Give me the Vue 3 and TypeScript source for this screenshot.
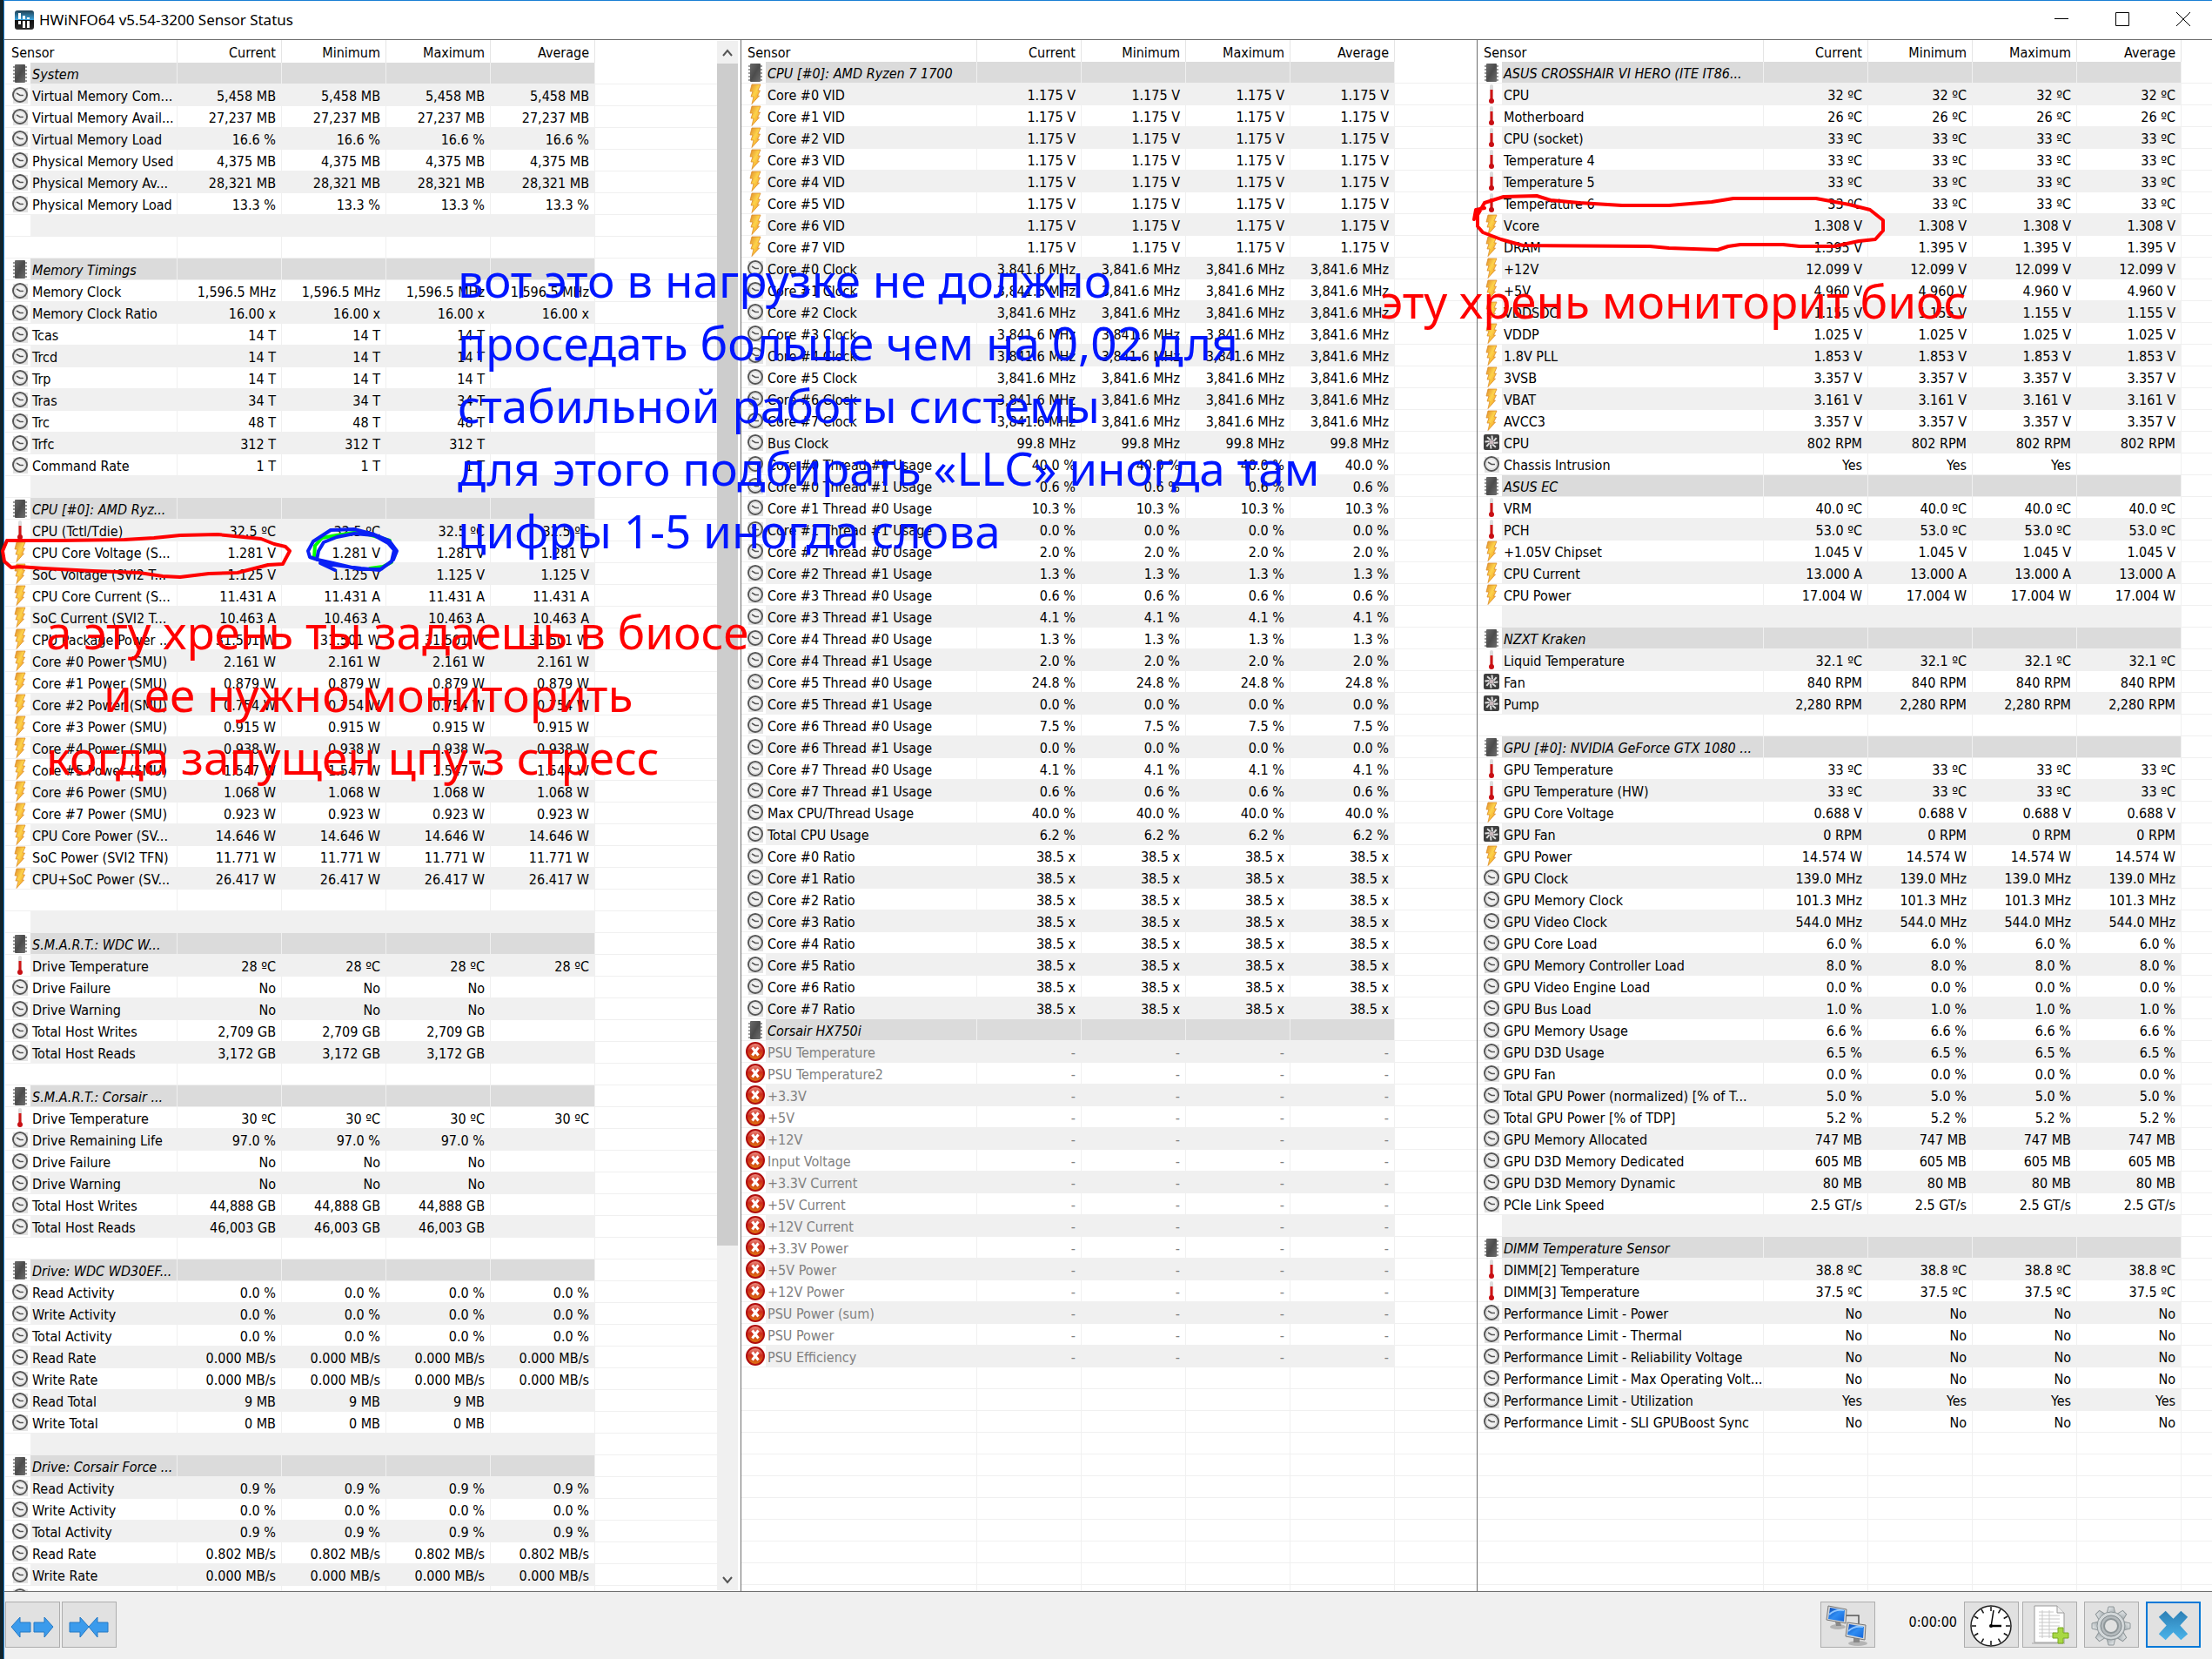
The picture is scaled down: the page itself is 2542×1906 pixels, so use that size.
<script setup lang="ts">
type Kind = 'chip' | 'clock' | 'temp' | 'bolt' | 'fan' | 'off' | 'none'

interface Row {
  kind: Kind
  name: string
  values: string[]
  alt: boolean
}

type Source = [Kind, string, string?, number?]

const columns = ['Current', 'Minimum', 'Maximum', 'Average']
const visibleRows = 71
const blank: Source = ['none', '']

function build(source: Source[]): Row[] {
  const rows = source.map(([kind, name, value = '', count = 4], i): Row => ({
    kind,
    name,
    values: columns.map((_, c) => (c < count ? value : '')),
    alt: i % 2 === 1 && kind !== 'chip',
  }))
  while (rows.length < visibleRows) {
    rows.push({ kind: 'none', name: '', values: ['', '', '', ''], alt: false })
  }
  return rows
}

const system: Source[] = [
  ['chip', 'System'],
  ['clock', 'Virtual Memory Com...', '5,458 MB'],
  ['clock', 'Virtual Memory Avail...', '27,237 MB'],
  ['clock', 'Virtual Memory Load', '16.6 %'],
  ['clock', 'Physical Memory Used', '4,375 MB'],
  ['clock', 'Physical Memory Av...', '28,321 MB'],
  ['clock', 'Physical Memory Load', '13.3 %'],
  blank,
  blank,
  ['chip', 'Memory Timings'],
  ['clock', 'Memory Clock', '1,596.5 MHz'],
  ['clock', 'Memory Clock Ratio', '16.00 x'],
  ['clock', 'Tcas', '14 T', 3],
  ['clock', 'Trcd', '14 T', 3],
  ['clock', 'Trp', '14 T', 3],
  ['clock', 'Tras', '34 T', 3],
  ['clock', 'Trc', '48 T', 3],
  ['clock', 'Trfc', '312 T', 3],
  ['clock', 'Command Rate', '1 T', 3],
  blank,
  ['chip', 'CPU [#0]: AMD Ryz...'],
  ['temp', 'CPU (Tctl/Tdie)', '32.5 ºC'],
  ['bolt', 'CPU Core Voltage (S...', '1.281 V'],
  ['bolt', 'SoC Voltage (SVI2 T...', '1.125 V'],
  ['bolt', 'CPU Core Current (S...', '11.431 A'],
  ['bolt', 'SoC Current (SVI2 T...', '10.463 A'],
  ['bolt', 'CPU Package Power ...', '31.501 W'],
  ['bolt', 'Core #0 Power (SMU)', '2.161 W'],
  ['bolt', 'Core #1 Power (SMU)', '0.879 W'],
  ['bolt', 'Core #2 Power (SMU)', '0.754 W'],
  ['bolt', 'Core #3 Power (SMU)', '0.915 W'],
  ['bolt', 'Core #4 Power (SMU)', '0.938 W'],
  ['bolt', 'Core #5 Power (SMU)', '1.547 W'],
  ['bolt', 'Core #6 Power (SMU)', '1.068 W'],
  ['bolt', 'Core #7 Power (SMU)', '0.923 W'],
  ['bolt', 'CPU Core Power (SV...', '14.646 W'],
  ['bolt', 'SoC Power (SVI2 TFN)', '11.771 W'],
  ['bolt', 'CPU+SoC Power (SV...', '26.417 W'],
  blank,
  blank,
  ['chip', 'S.M.A.R.T.: WDC W...'],
  ['temp', 'Drive Temperature', '28 ºC'],
  ['clock', 'Drive Failure', 'No', 3],
  ['clock', 'Drive Warning', 'No', 3],
  ['clock', 'Total Host Writes', '2,709 GB', 3],
  ['clock', 'Total Host Reads', '3,172 GB', 3],
  blank,
  ['chip', 'S.M.A.R.T.: Corsair ...'],
  ['temp', 'Drive Temperature', '30 ºC'],
  ['clock', 'Drive Remaining Life', '97.0 %', 3],
  ['clock', 'Drive Failure', 'No', 3],
  ['clock', 'Drive Warning', 'No', 3],
  ['clock', 'Total Host Writes', '44,888 GB', 3],
  ['clock', 'Total Host Reads', '46,003 GB', 3],
  blank,
  ['chip', 'Drive: WDC WD30EF...'],
  ['clock', 'Read Activity', '0.0 %'],
  ['clock', 'Write Activity', '0.0 %'],
  ['clock', 'Total Activity', '0.0 %'],
  ['clock', 'Read Rate', '0.000 MB/s'],
  ['clock', 'Write Rate', '0.000 MB/s'],
  ['clock', 'Read Total', '9 MB', 3],
  ['clock', 'Write Total', '0 MB', 3],
  blank,
  ['chip', 'Drive: Corsair Force ...'],
  ['clock', 'Read Activity', '0.9 %'],
  ['clock', 'Write Activity', '0.0 %'],
  ['clock', 'Total Activity', '0.9 %'],
  ['clock', 'Read Rate', '0.802 MB/s'],
  ['clock', 'Write Rate', '0.000 MB/s'],
  ['clock', ''],
]

const cores = [0, 1, 2, 3, 4, 5, 6, 7]
const usage = [
  '40.0', '0.6', '10.3', '0.0', '2.0', '1.3', '0.6', '4.1',
  '1.3', '2.0', '24.8', '0.0', '7.5', '0.0', '4.1', '0.6',
]
const psu = [
  'PSU Temperature', 'PSU Temperature2', '+3.3V', '+5V', '+12V', 'Input Voltage',
  '+3.3V Current', '+5V Current', '+12V Current', '+3.3V Power', '+5V Power',
  '+12V Power', 'PSU Power (sum)', 'PSU Power', 'PSU Efficiency',
]

const processor: Source[] = [
  ['chip', 'CPU [#0]: AMD Ryzen 7 1700'],
  ...cores.map((n): Source => ['bolt', `Core #${n} VID`, '1.175 V']),
  ...cores.map((n): Source => ['clock', `Core #${n} Clock`, '3,841.6 MHz']),
  ['clock', 'Bus Clock', '99.8 MHz'],
  ...usage.map((v, i): Source => ['clock', `Core #${i >> 1} Thread #${i & 1} Usage`, `${v} %`]),
  ['clock', 'Max CPU/Thread Usage', '40.0 %'],
  ['clock', 'Total CPU Usage', '6.2 %'],
  ...cores.map((n): Source => ['clock', `Core #${n} Ratio`, '38.5 x']),
  ['chip', 'Corsair HX750i'],
  ...psu.map((name): Source => ['off', name, '-']),
]

const board: Source[] = [
  ['chip', 'ASUS CROSSHAIR VI HERO (ITE IT86...'],
  ['temp', 'CPU', '32 ºC'],
  ['temp', 'Motherboard', '26 ºC'],
  ['temp', 'CPU (socket)', '33 ºC'],
  ['temp', 'Temperature 4', '33 ºC'],
  ['temp', 'Temperature 5', '33 ºC'],
  ['temp', 'Temperature 6', '33 ºC'],
  ['bolt', 'Vcore', '1.308 V'],
  ['bolt', 'DRAM', '1.395 V'],
  ['bolt', '+12V', '12.099 V'],
  ['bolt', '+5V', '4.960 V'],
  ['bolt', 'VDDSOC', '1.155 V'],
  ['bolt', 'VDDP', '1.025 V'],
  ['bolt', '1.8V PLL', '1.853 V'],
  ['bolt', '3VSB', '3.357 V'],
  ['bolt', 'VBAT', '3.161 V'],
  ['bolt', 'AVCC3', '3.357 V'],
  ['fan', 'CPU', '802 RPM'],
  ['clock', 'Chassis Intrusion', 'Yes', 3],
  ['chip', 'ASUS EC'],
  ['temp', 'VRM', '40.0 ºC'],
  ['temp', 'PCH', '53.0 ºC'],
  ['bolt', '+1.05V Chipset', '1.045 V'],
  ['bolt', 'CPU Current', '13.000 A'],
  ['bolt', 'CPU Power', '17.004 W'],
  blank,
  ['chip', 'NZXT Kraken'],
  ['temp', 'Liquid Temperature', '32.1 ºC'],
  ['fan', 'Fan', '840 RPM'],
  ['fan', 'Pump', '2,280 RPM'],
  blank,
  ['chip', 'GPU [#0]: NVIDIA GeForce GTX 1080 ...'],
  ['temp', 'GPU Temperature', '33 ºC'],
  ['temp', 'GPU Temperature (HW)', '33 ºC'],
  ['bolt', 'GPU Core Voltage', '0.688 V'],
  ['fan', 'GPU Fan', '0 RPM'],
  ['bolt', 'GPU Power', '14.574 W'],
  ['clock', 'GPU Clock', '139.0 MHz'],
  ['clock', 'GPU Memory Clock', '101.3 MHz'],
  ['clock', 'GPU Video Clock', '544.0 MHz'],
  ['clock', 'GPU Core Load', '6.0 %'],
  ['clock', 'GPU Memory Controller Load', '8.0 %'],
  ['clock', 'GPU Video Engine Load', '0.0 %'],
  ['clock', 'GPU Bus Load', '1.0 %'],
  ['clock', 'GPU Memory Usage', '6.6 %'],
  ['clock', 'GPU D3D Usage', '6.5 %'],
  ['clock', 'GPU Fan', '0.0 %'],
  ['clock', 'Total GPU Power (normalized) [% of T...', '5.0 %'],
  ['clock', 'Total GPU Power [% of TDP]', '5.2 %'],
  ['clock', 'GPU Memory Allocated', '747 MB'],
  ['clock', 'GPU D3D Memory Dedicated', '605 MB'],
  ['clock', 'GPU D3D Memory Dynamic', '80 MB'],
  ['clock', 'PCIe Link Speed', '2.5 GT/s'],
  blank,
  ['chip', 'DIMM Temperature Sensor'],
  ['temp', 'DIMM[2] Temperature', '38.8 ºC'],
  ['temp', 'DIMM[3] Temperature', '37.5 ºC'],
  ['clock', 'Performance Limit - Power', 'No'],
  ['clock', 'Performance Limit - Thermal', 'No'],
  ['clock', 'Performance Limit - Reliability Voltage', 'No'],
  ['clock', 'Performance Limit - Max Operating Volt...', 'No'],
  ['clock', 'Performance Limit - Utilization', 'Yes'],
  ['clock', 'Performance Limit - SLI GPUBoost Sync', 'No'],
]

const panels = [
  { id: 'system', scroll: true, rows: build(system) },
  { id: 'processor', scroll: false, rows: build(processor) },
  { id: 'board', scroll: false, rows: build(board) },
]

const ticks = [0, 30, 60, 90, 120, 150, 180, 210, 240, 270, 300, 330]
const teeth = [0, 45, 90, 135, 180, 225, 270, 315]
</script>

<template>
  <div class="desktop">
    <svg class="defs" aria-hidden="true">
      <defs>
        <linearGradient id="gBolt" x1="0" y1="0" x2="1" y2="1">
          <stop offset="0" stop-color="#e08a2a" />
          <stop offset="0.45" stop-color="#fdd34a" />
          <stop offset="1" stop-color="#f08a18" />
        </linearGradient>
        <linearGradient id="gChip" x1="0" y1="0" x2="1" y2="1">
          <stop offset="0" stop-color="#6a6a6a" />
          <stop offset="0.5" stop-color="#4c4c4c" />
          <stop offset="1" stop-color="#6e6e6e" />
        </linearGradient>
        <linearGradient id="gOff" x1="0" y1="0" x2="0" y2="1">
          <stop offset="0" stop-color="#f09a8e" />
          <stop offset="0.45" stop-color="#cc2a1a" />
          <stop offset="1" stop-color="#e07a10" />
        </linearGradient>
        <linearGradient id="gBlue" x1="0" y1="0" x2="1" y2="1">
          <stop offset="0" stop-color="#0a49b8" />
          <stop offset="0.5" stop-color="#2f8df2" />
          <stop offset="1" stop-color="#1565d8" />
        </linearGradient>
        <linearGradient id="gApp" x1="0" y1="0" x2="0" y2="1">
          <stop offset="0" stop-color="#1f3f52" />
          <stop offset="0.48" stop-color="#3aa0d8" />
          <stop offset="0.5" stop-color="#101010" />
          <stop offset="1" stop-color="#2b2b2b" />
        </linearGradient>
        <linearGradient id="gGear" x1="0" y1="0" x2="1" y2="1">
          <stop offset="0" stop-color="#eef1f2" />
          <stop offset="1" stop-color="#9ea6aa" />
        </linearGradient>
        <linearGradient id="gCross" x1="0" y1="0" x2="0" y2="1">
          <stop offset="0" stop-color="#2c7fb5" />
          <stop offset="1" stop-color="#4bb4ea" />
        </linearGradient>
        <symbol id="chip" viewBox="0 0 24 24">
          <path d="M4 5h4M4 9h4M4 13h4M4 17h4M4 21h4M16 5h4M16 9h4M16 13h4M16 17h4M16 21h4" stroke="#9a9a9a" stroke-width="2" />
          <rect x="6" y="2" width="12" height="21" rx="1" fill="url(#gChip)" />
        </symbol>
        <symbol id="clock" viewBox="0 0 24 24">
          <rect x="4" y="4" width="17" height="18" fill="#e2e2e2" />
          <circle cx="12" cy="12" r="8" fill="#f2f2f2" stroke="#565656" stroke-width="2" />
          <circle cx="12" cy="12" r="6" fill="none" stroke="#d4d4d4" />
          <path d="M8 10l4 2.500h4" fill="none" stroke="#555" stroke-width="1.500" />
        </symbol>
        <symbol id="temp" viewBox="0 0 24 24">
          <rect x="10" y="1" width="4" height="18" rx="2" fill="#dcdcdc" />
          <path d="M12 7v13" stroke="#d01414" stroke-width="3" />
          <circle cx="12" cy="20" r="3" fill="#c80f14" />
        </symbol>
        <symbol id="bolt" viewBox="0 0 24 24">
          <path d="M8 1h10l-3 7h2.500l-3 6h2L8 23.500l2-8.500H7l2-6H6z" fill="url(#gBolt)" stroke="#dc8d2c" stroke-width="0.800" />
        </symbol>
        <symbol id="fan" viewBox="0 0 24 24">
          <rect x="3" y="3" width="18" height="18" rx="2" fill="#3f3f3f" />
          <g stroke="#dedede" stroke-width="2">
            <path v-for="a in teeth" :key="a" d="M13 9.500L12.500 4.500" :transform="`rotate(${a} 12 12)`" />
          </g>
          <circle cx="12" cy="12" r="2.500" fill="#cbb9be" />
        </symbol>
        <symbol id="off" viewBox="0 0 24 24">
          <circle cx="12" cy="12" r="10" fill="url(#gOff)" stroke="#b00d0d" stroke-width="2" />
          <path d="M8.500 7.500l7 9M15.500 7.500l-7 9" stroke="#fff" stroke-width="3" />
        </symbol>
      </defs>
    </svg>

    <div class="window">
      <header class="titlebar">
        <svg class="app-icon" viewBox="0 0 22 22" aria-hidden="true">
          <rect width="22" height="22" rx="3" fill="url(#gApp)" />
          <path d="M5.500 3v7M10.500 6v4M15.500 8v2" stroke="#fff" stroke-width="3" />
          <path d="M5.500 12v4M10.500 12v8M15.500 12v8" stroke="#fff" stroke-width="3" />
        </svg>
        <h1>HWiNFO64 v5.54-3200 Sensor Status</h1>
        <div class="controls">
          <button type="button" aria-label="Minimize">
            <svg viewBox="0 0 16 16"><path d="M0 7.500h16" /></svg>
          </button>
          <button type="button" aria-label="Maximize">
            <svg viewBox="0 0 16 16"><path d="M.5.500h15v15h-15z" /></svg>
          </button>
          <button type="button" aria-label="Close">
            <svg viewBox="0 0 16 16"><path d="M0 0l16 16M16 0L0 16" /></svg>
          </button>
        </div>
      </header>

      <main class="panels">
        <section v-for="panel in panels" :key="panel.id" class="panel" :class="panel.id">
          <div class="list">
            <table>
              <colgroup>
                <col class="c-icon" />
                <col class="c-name" />
                <col v-for="c in columns" :key="c" class="c-value" />
                <col />
              </colgroup>
              <thead>
                <tr>
                  <th colspan="2" scope="col" class="sensor">Sensor</th>
                  <th v-for="c in columns" :key="c" scope="col">{{ c }}</th>
                  <td class="rest"></td>
                </tr>
              </thead>
              <tbody>
                <tr v-for="(row, i) in panel.rows" :key="i" :class="[row.kind, { alt: row.alt }]">
                  <td class="icon">
                    <svg v-if="row.kind !== 'none'" aria-hidden="true"><use :href="`#${row.kind}`" /></svg>
                  </td>
                  <td class="name">{{ row.name }}</td>
                  <td v-for="(v, c) in row.values" :key="c" class="value">{{ v }}</td>
                  <td class="rest"></td>
                </tr>
              </tbody>
            </table>
          </div>
          <div v-if="panel.scroll" class="scrollbar">
            <button type="button" aria-label="Scroll up">
              <svg viewBox="0 0 12 12"><path d="M1 9l5-6 5 6" /></svg>
            </button>
            <div class="track"><div class="thumb"></div></div>
            <button type="button" aria-label="Scroll down">
              <svg viewBox="0 0 12 12"><path d="M1 3l5 6 5-6" /></svg>
            </button>
          </div>
        </section>
      </main>

      <footer class="toolbar">
        <button type="button" class="tool" aria-label="Expand columns">
          <svg viewBox="0 0 60 50">
            <g fill="#3b9bec" stroke="#2478c4">
              <path d="M6 27l10-11v6h12v11H16v6z" />
              <path d="M54 27L44 16v6H32v11h12v6z" />
            </g>
          </svg>
        </button>
        <button type="button" class="tool" aria-label="Shrink columns">
          <svg viewBox="0 0 60 50">
            <g fill="#3b9bec" stroke="#2478c4">
              <path d="M30 27L20 16v6H8v11h12v6z" />
              <path d="M30 27l10-11v6h12v11H40v6z" />
            </g>
          </svg>
        </button>
        <div class="spacer"></div>
        <button type="button" class="tool network" aria-label="Remote monitoring">
          <svg viewBox="0 0 60 50">
            <path d="M26 14h17v12" fill="none" stroke="#555" stroke-width="1.500" />
            <ellipse cx="19" cy="27" rx="9" ry="3" fill="#b4b4b4" />
            <path d="M16 21l6 1 1 4h-6z" fill="#888" />
            <path d="M8 3l21 4-1 16-22-4z" fill="#d8d8d8" stroke="#777" />
            <path d="M10 5l17 3-1 13L8 18z" fill="url(#gBlue)" />
            <path d="M9 13c5-5 11-6 17-5" fill="none" stroke="#8fc6ff" stroke-width="2" />
            <ellipse cx="42" cy="46" rx="11" ry="3" fill="#b4b4b4" />
            <path d="M37 39l7 1v5h-7z" fill="#888" />
            <path d="M30 22l21 3-1 17-22-4z" fill="#d8d8d8" stroke="#777" />
            <path d="M32 24l17 3-1 13-18-4z" fill="url(#gBlue)" />
            <path d="M31 32c5-5 11-6 17-5" fill="none" stroke="#8fc6ff" stroke-width="2" />
          </svg>
        </button>
        <time class="elapsed">0:00:00</time>
        <button type="button" class="tool" aria-label="Reset clock">
          <svg viewBox="0 0 60 50">
            <circle cx="30" cy="26" r="23" fill="#fff" stroke="#222" stroke-width="1.500" />
            <path v-for="a in ticks" :key="a" d="M30 4v5" stroke="#111" stroke-width="1.500" :transform="`rotate(${a} 30 26)`" />
            <path d="M30 27L33 8" stroke="#000" stroke-width="1.500" />
            <path d="M30 26h12" stroke="#000" stroke-width="2.500" />
            <circle cx="30" cy="26" r="2" />
          </svg>
        </button>
        <button type="button" class="tool log" aria-label="Logging start">
          <svg viewBox="0 0 60 50">
            <path d="M10 45h38v2H10z" fill="#c4c4c4" />
            <path d="M13 3h26l8 8v34H13z" fill="#fff" stroke="#999" />
            <path d="M39 3v8h8" fill="#eee" stroke="#999" />
            <path d="M18 10h17M18 14h24M18 18h24M18 22h24M18 26h24M18 30h24M18 34h20M18 38h16M22 8v32M30 8v32" stroke="#c8c8c8" />
            <path d="M40 28h6v6h6v6h-6v6h-6v-6h-6v-6h6z" fill="#a8d843" stroke="#78a823" />
          </svg>
        </button>
        <button type="button" class="tool settings" aria-label="Settings">
          <svg viewBox="0 0 60 50">
            <g fill="url(#gGear)" stroke="#8e9699">
              <path v-for="a in teeth" :key="a" d="M25 12L27 4h6l2 8z" :transform="`rotate(${a} 30 26)`" />
              <circle cx="30" cy="26" r="16" />
            </g>
            <circle cx="30" cy="26" r="15" fill="#d3d8da" />
            <circle cx="30" cy="26" r="12" fill="#b4babd" stroke="#7d8589" />
            <circle cx="30" cy="26" r="8" fill="#e1e1e1" stroke="#8e9699" stroke-width="2" />
          </svg>
        </button>
        <button type="button" class="tool close" aria-label="Close sensors">
          <svg viewBox="0 0 60 50">
            <path d="M21 9l9 9 9-9 8 7-9 10 9 10-8 7-9-9-9 9-8-7 9-10-9-10z" fill="url(#gCross)" />
          </svg>
        </button>
      </footer>
    </div>

    <svg class="strokes" aria-hidden="true">
      <g fill="none" stroke-width="4" stroke-linejoin="round" stroke-linecap="round">
        <path stroke="#f00" d="M8 621L67 621 143 620 177 618 207 615 250 614 300 619 315 625 328 628 333 633 325 648 308 649 273 658 240 659 207 663 187 662 160 658 107 656 50 653 22 651 13 652 5 645 3 633z" />
        <path stroke="#0f0" d="M361 640L362 627 370 618 387 615 413 611 448 621M425 653L440 651 450 646" />
        <path stroke="#0a20f5" d="M354 633L360 622 380 609 407 608 430 614 447 621 456 633 452 643 438 654 413 654 383 647 365 643 356 640zM364 643L366 633 372 623 387 617 407 613 430 615 446 624 453 632 450 645 436 655 415 653 368 647 385 655" />
        <path stroke="#f00" d="M1706 239L1696 241 1694 252M1698 260L1698 247 1706 233 1728 226 1766 225 1782 230 1815 233 1864 236 1918 236 1967 232 1992 228 2087 228 2125 235 2149 241 2164 253 2164 265 2155 275 2136 277 2108 283 2068 283 2049 281 2000 281 1986 283 1974 287 1918 285 1896 283 1750 282 1725 275 1704 267z" />
      </g>
    </svg>
    <p class="note blue">вот это в нагрузке не должно<br />проседать больше чем на 0,02 для<br />стабильной работы системы<br />для этого подбирать «LLC» иногда там<br />цифры 1-5 иногда слова</p>
    <p class="note red set">а эту хрень ты задаешь в биосе<br /><span class="indent">и ее нужно мониторить</span><br />когда запущен цпу-з стресс</p>
    <p class="note red watch">эту хрень мониторит биос</p>
  </div>
</template>

<style>
body {
  margin: 0;
}
</style>

<style scoped>
.desktop {
  position: relative;
  height: 100vh;
  padding-left: 4px;
  box-sizing: border-box;
  overflow: hidden;
  background: #12242c;
  font-family: "DejaVu Sans Condensed", "DejaVu Sans", sans-serif;
  font-size: 16px;
  color: #000;
}
.defs {
  position: absolute;
  width: 0;
  height: 0;
}
.window {
  display: flex;
  flex-direction: column;
  height: 100%;
  box-sizing: border-box;
  border-top: 1px solid #1a7fd4;
  border-left: 1px solid #1a7fd4;
  background: #fff;
}
.titlebar {
  display: flex;
  align-items: center;
  flex: none;
  height: 44px;
  padding-left: 12px;
}
.app-icon {
  width: 22px;
  height: 22px;
}
h1 {
  margin: 0 0 0 6px;
  font: 400 17px/24px "Noto Sans", sans-serif;
}
.controls {
  display: flex;
  gap: 4px;
  margin-left: auto;
}
.controls button {
  width: 66px;
  height: 44px;
  padding: 0;
  border: 0;
  background: none;
}
.controls svg {
  width: 16px;
  height: 16px;
  fill: none;
  stroke: #000;
}
.panels {
  display: grid;
  grid-template-columns: 846fr 846fr 845fr;
  flex: 1;
  min-height: 0;
  border-top: 1px solid #6e6e6e;
  border-bottom: 1px solid #6e6e6e;
}
.panel {
  display: flex;
  min-width: 0;
  min-height: 0;
  border-left: 1px solid #6e6e6e;
}
.panel.system {
  border-left-color: #fff;
}
.list {
  flex: 1;
  min-width: 0;
  overflow: hidden;
}
table {
  width: 100%;
  table-layout: fixed;
  border-collapse: separate;
  border-spacing: 0;
}
th,
td {
  box-sizing: border-box;
  padding: 0;
  overflow: hidden;
  white-space: nowrap;
}
.c-icon {
  width: 28px;
}
.c-value {
  width: 120px;
}
.system .c-icon {
  width: 29px;
}
.system .c-name {
  width: 169px;
}
.processor .c-name {
  width: 243px;
}
.board .c-name {
  width: 301px;
}
th {
  height: 25px;
  padding: 3px 6px 0 0;
  border-right: 1px solid #e5e5e5;
  font-weight: 400;
  line-height: 21px;
  text-align: right;
}
.system th {
  height: 26px;
}
th.sensor {
  padding-left: 7px;
  text-align: left;
}
tbody td {
  height: 25px;
  border-bottom: 1px solid #f0f0f0;
  line-height: 21px;
}
tbody .name,
tbody .value {
  border-right: 1px solid #f0f0f0;
}
.name {
  padding: 3px 0 0 2px;
}
.value {
  padding: 3px 6px 0 0;
  text-align: right;
}
.icon svg {
  display: block;
  width: 24px;
  height: 24px;
  margin-left: auto;
}
.alt .name,
.alt .value {
  background: #f0f0f0;
}
.chip .name,
.chip .value {
  background: #dbdbdb;
}
.chip .name {
  font-style: italic;
}
.off .name,
.off .value {
  color: #808080;
}
.scrollbar {
  display: flex;
  flex-direction: column;
  flex: none;
  width: 24px;
  margin: 1px 3px 1px 0;
  background: #f0f0f0;
}
.scrollbar button {
  height: 26px;
  padding: 4px 0 0;
  border: 0;
  background: #f0f0f0;
}
.scrollbar svg {
  width: 12px;
  height: 12px;
  fill: none;
  stroke: #555;
  stroke-width: 2;
}
.track {
  flex: 1;
}
.thumb {
  height: calc(100% * 11 / 14);
  background: #cdcdcd;
}
.toolbar {
  display: flex;
  align-items: center;
  flex: none;
  gap: 2px;
  height: 77px;
  padding: 0 13px 2px 1px;
  box-sizing: border-box;
  background: #f0f0f0;
}
.tool {
  width: 63px;
  height: 53px;
  padding: 0;
  border: 1px solid #adadad;
  background: #e1e1e1;
}
.tool svg {
  display: block;
  width: 60px;
  height: 50px;
}
.spacer {
  flex: 1;
}
.network {
  margin-right: 37px;
}
.elapsed {
  margin: 0 6px 6px 0;
}
.log {
  margin-left: 2px;
}
.settings,
.close {
  margin-left: 6px;
}
.close {
  border: 2px solid #0078d7;
}
.close svg {
  width: 59px;
  height: 49px;
}
.strokes {
  position: absolute;
  top: 0;
  left: 0;
  width: 100%;
  height: 100%;
  pointer-events: none;
}
.note {
  position: absolute;
  margin: 0;
  font-family: "Noto Sans", sans-serif;
  font-size: 53px;
  line-height: 72px;
  white-space: nowrap;
  pointer-events: none;
}
.blue {
  top: 286px;
  left: 526px;
  color: #0016ff;
}
.red {
  color: #f00;
}
.set {
  top: 690px;
  left: 53px;
}
.indent {
  margin-left: 66px;
}
.watch {
  top: 310px;
  left: 1586px;
}
</style>
